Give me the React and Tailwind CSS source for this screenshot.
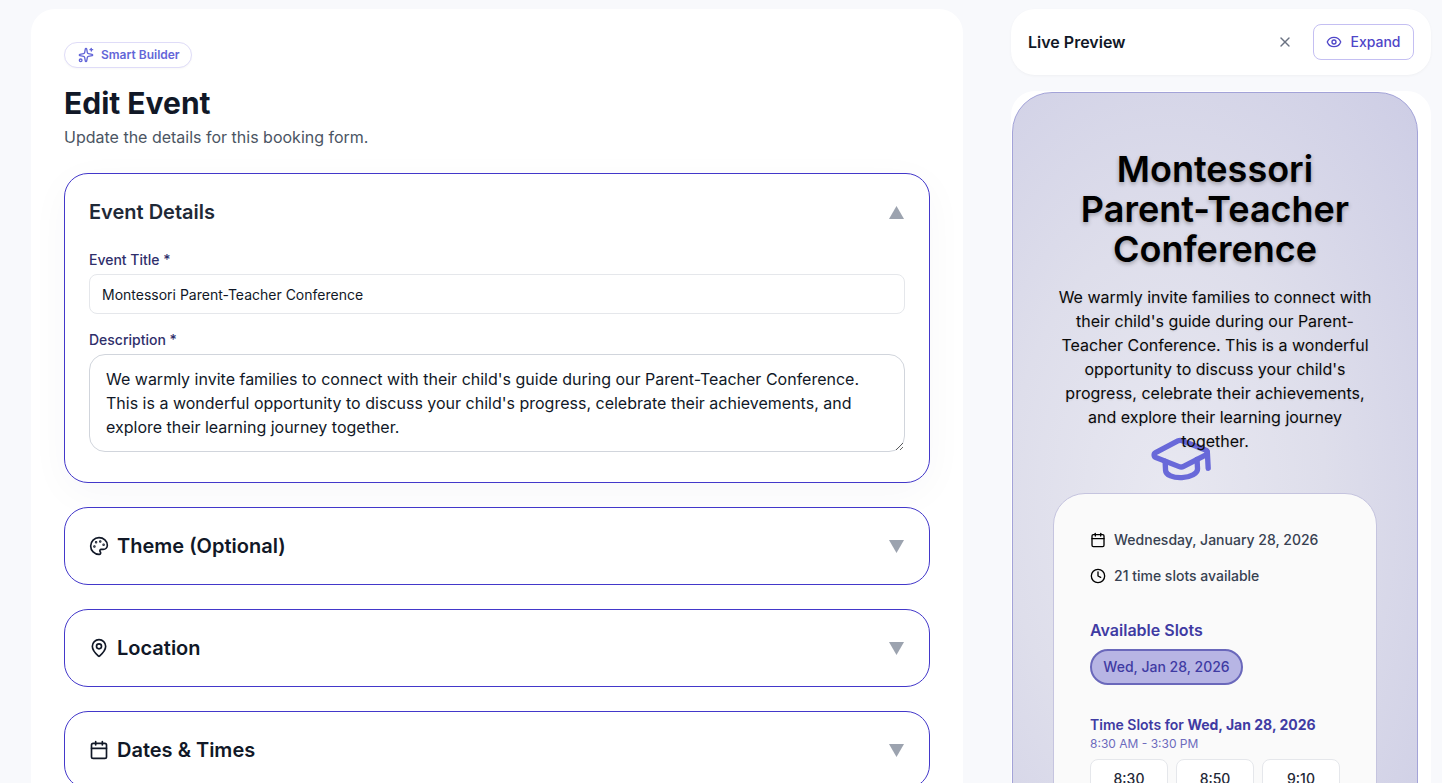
import React from "react";
import { Sparkles, X, Eye, Palette, MapPin, Calendar, Clock, GraduationCap } from "lucide-react";

function Tri({ up }) {
  return (
    <svg width="15" height="13" viewBox="0 0 15 13" className="mr-px shrink-0 text-[#9ca3af]" fill="currentColor">
      <polygon points={up ? "7.5,0 15,13 0,13" : "0,0 15,0 7.5,13"} />
    </svg>
  );
}

function Section({ icon: Icon, title }) {
  return (
    <section className="flex h-[78px] shrink-0 items-center justify-between rounded-3xl border border-[#4338ca] bg-white px-6">
      <h2 className="flex items-center gap-2 text-xl font-semibold text-[#111827]">
        <Icon size={20} strokeWidth={2} />
        {title}
      </h2>
      <Tri />
    </section>
  );
}

export default function App() {
  const desc =
    "We warmly invite families to connect with their child's guide during our Parent-Teacher Conference. This is a wonderful opportunity to discuss your child's progress, celebrate their achievements, and explore their learning journey together.";
  return (
    <div className="flex h-[783px] items-start gap-[48px] overflow-hidden bg-[#f8f9fc] pl-[31px] pt-[9px] font-['Inter',sans-serif]">
      <main className="flex w-[932px] shrink-0 flex-col rounded-3xl bg-white px-[33px] pt-[33px] pb-10">
        <div className="flex h-[26px] w-[128px] items-center gap-[7px] rounded-full border border-[#dfdcf8] bg-white pl-[13px] text-xs font-semibold text-[#6366d8] shadow-[0_1px_2px_rgba(0,0,0,0.03)]">
          <Sparkles size={16} strokeWidth={2} />
          Smart Builder
        </div>
        <h1 className="mt-[17px] text-3xl leading-9 font-bold text-[#111827]">Edit Event</h1>
        <p className="mt-[4px] text-base leading-6 text-[#4b5563]">Update the details for this booking form.</p>

        <div className="mt-[24px] flex flex-col gap-6">
          <section className="rounded-3xl border border-[#4338ca] bg-white px-6 pt-6 pb-[30px] shadow-[0_10px_40px_rgba(40,40,90,0.035)]">
            <div className="flex h-7 items-center justify-between">
              <h2 className="text-xl font-semibold text-[#1f2937]">Event Details</h2>
              <Tri up />
            </div>
            <label className="mt-6 block text-sm leading-5 font-medium text-[#2f2f6b]">Event Title *</label>
            <input
              readOnly
              value="Montessori Parent-Teacher Conference"
              className="mt-[4px] block h-10 w-full rounded-lg border border-gray-200 bg-white px-3 text-sm text-[#111827] outline-none"
            />
            <label className="mt-4 block text-sm leading-5 font-medium text-[#2f2f6b]">Description *</label>
            <textarea
              readOnly
              value={desc}
              className="mt-[4px] block h-[98px] w-full rounded-2xl border border-gray-300 bg-white px-4 py-[12px] text-base leading-6 text-[#111827] outline-none"
            />
          </section>
          <Section icon={Palette} title="Theme (Optional)" />
          <Section icon={MapPin} title="Location" />
          <Section icon={Calendar} title="Dates & Times" />
        </div>
      </main>

      <aside className="flex w-[420px] shrink-0 flex-col gap-[16px]">
        <header className="flex h-[66px] items-center justify-between rounded-3xl bg-white pl-[17px] pr-[17px] shadow-[0_1px_3px_rgba(0,0,0,0.04)]">
          <span className="text-base font-semibold text-[#111827]">Live Preview</span>
          <div className="flex items-center gap-[20px]">
            <X size={16} className="text-gray-500" />
            <button className="flex h-9 w-[101px] items-center justify-center gap-2 rounded-lg border border-[#c4bff2] bg-white text-sm font-medium text-[#4f46c8]">
              <Eye size={16} />
              Expand
            </button>
          </div>
        </header>

        <div className="flex rounded-3xl bg-white pl-px pr-[13px] pt-px">
          <div className="w-[406px] rounded-t-[40px] border border-[#a3a3d8] bg-[radial-gradient(ellipse_at_38%_56%,#e8e8f1_0%,#dedeeb_45%,#cdcde5_100%)] pt-[56px]">
            <h2 className="relative z-10 mx-auto w-[300px] text-center text-4xl leading-10 font-semibold text-black [text-shadow:0_2px_4px_rgba(0,0,0,0.3)]">
              Montessori Parent-Teacher Conference
            </h2>
            <p className="relative z-10 mx-auto mt-[16px] w-[322px] text-center text-base leading-6 text-[#0a0a0a] [text-shadow:0_1px_2px_rgba(0,0,0,0.1)]">
              {desc}
            </p>
            <div className="-mt-[26px] flex justify-center">
              <GraduationCap size={64} strokeWidth={2} className="-translate-x-[34px] -rotate-3 text-[#4a4ad4] opacity-80" />
            </div>
            <div className="mx-auto mt-[2px] w-[324px] rounded-t-[32px] border border-[#c5c4df] bg-[#fafafa] px-9 pt-[36px] pb-6">
              <div className="flex items-center gap-2 text-sm leading-5 font-medium text-[#374151]">
                <Calendar size={16} className="text-black" />
                Wednesday, January 28, 2026
              </div>
              <div className="mt-4 flex items-center gap-2 text-sm leading-5 font-medium text-[#374151]">
                <Clock size={16} className="text-black" />
                21 time slots available
              </div>
              <h3 className="mt-[32px] text-base leading-6 font-semibold text-[#3f3ba3]">Available Slots</h3>
              <div className="mt-[7px] flex h-[36px] w-[153px] items-center justify-center rounded-full border-2 border-[#6a68bb] bg-[#b7b5e4] text-sm font-medium text-[#3f3ba3]">
                Wed, Jan 28, 2026
              </div>
              <p className="mt-[30px] text-sm leading-5 font-semibold text-[#3f3ba3]">
                Time Slots for <span className="font-bold">Wed, Jan 28, 2026</span>
              </p>
              <p className="mt-px text-xs leading-4 text-[#6d6bbd]">8:30 AM - 3:30 PM</p>
              <div className="mt-[7px] flex gap-2">
                {["8:30", "8:50", "9:10"].map((t) => (
                  <div key={t} className="flex h-10 w-[78px] items-center justify-center rounded-lg border border-gray-200 bg-white text-sm font-medium text-[#1f2937]">
                    {t}
                  </div>
                ))}
              </div>
            </div>
          </div>
        </div>
      </aside>
    </div>
  );
}
